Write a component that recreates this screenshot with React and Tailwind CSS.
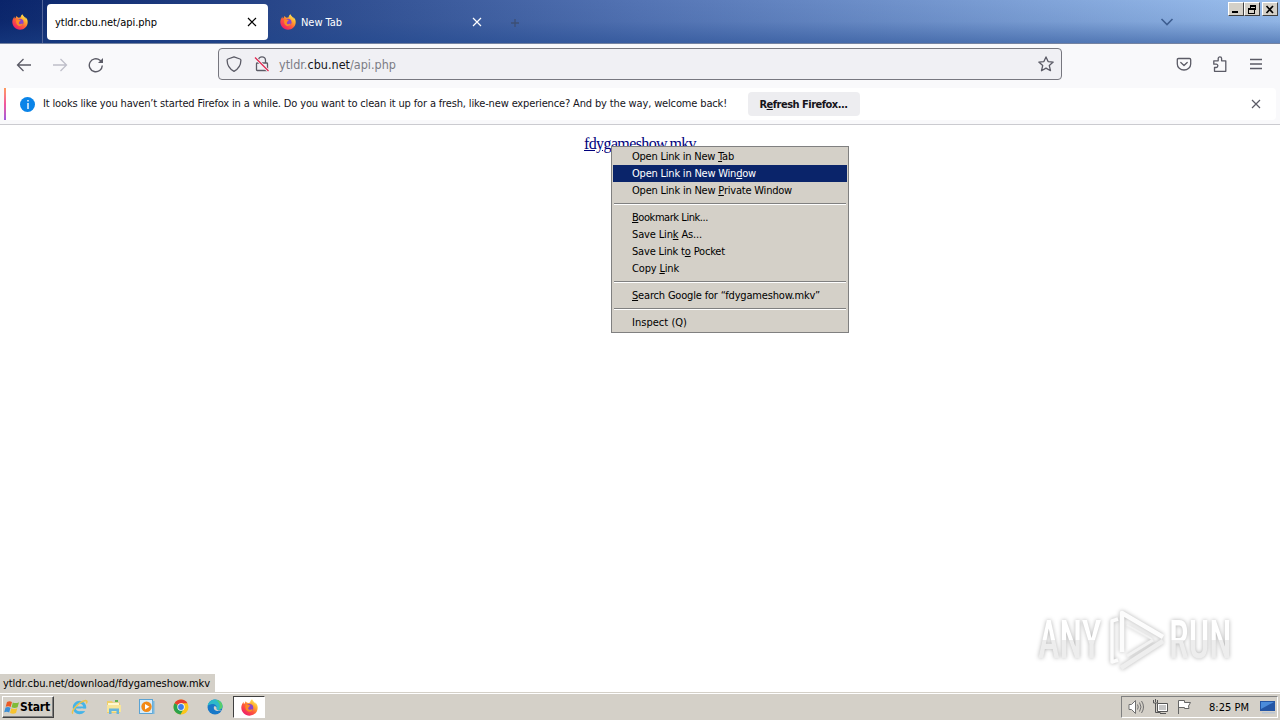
import { useLayoutEffect, useRef, useState } from "react";

// Spreads its letters so that the line fills the given width.
function Label({ w, className = "", children }) {
  const ref = useRef(null);
  const [gap, setGap] = useState(0);
  useLayoutEffect(() => {
    const el = ref.current;
    el.style.letterSpacing = "0px";
    const g = (w - el.getBoundingClientRect().width) / el.textContent.length;
    el.style.letterSpacing = g + "px";
    setGap(g);
  }, [w]);
  return (
    <span ref={ref} className={"inline-block shrink-0 whitespace-nowrap " + className} style={{ letterSpacing: gap }}>
      {children}
    </span>
  );
}

function Key({ children }) {
  return <span className="underline decoration-1 underline-offset-1">{children}</span>;
}

function Firefox({ className = "size-4", id }) {
  return (
    <svg viewBox="0 0 16 16" className={"shrink-0 " + className}>
      <defs>
        <linearGradient id={id} x1="0.9" y1="0.05" x2="0.2" y2="0.95">
          <stop offset="0" stopColor="#fff36b" />
          <stop offset="0.3" stopColor="#ffb22e" />
          <stop offset="0.6" stopColor="#ff5b3a" />
          <stop offset="1" stopColor="#ee1a6c" />
        </linearGradient>
      </defs>
      <path
        d="M15.2 5.6c-.4-1-1.2-2-2-2.3.3.6.5 1 .6 1.5C12.800 3 11.200 2.200 10.400 0.300c-1.300.8-1.700 2-1.700 2.900-.6 0-1.300.3-1.800.6C5.800 3.500 4.900 2.900 4.500 2c-.6.5-.8 1.300-.8 1.900-.5.2-.7.400-.9.700C2.400 4.200 2.500 3 2.700 2.500 1.500 3.500.5 5.500.3 7.600.1 12 3.500 15.700 8 15.700c4.200 0 7.700-3.200 7.700-7.500 0-.9-.2-1.800-.5-2.600z"
        fill={"url(#" + id + ")"}
      />
      <circle cx="8" cy="8.200" r="3.500" fill="#8a45c9" />
      <path d="M4.200 6.200C5 5 6.500 5 7.300 5.700l1.500.4c-.2.700-1 .8-1.300 1.300 0 .5-.6 1-.8 1.500.3 1.200 1.600 1.700 3 .9.6-.3 1-.2 1.300.2-.8 1.600-2.300 2.200-3.900 1.900C5 11.500 3.600 9 4.200 6.200z" fill="#ff8b22" />
    </svg>
  );
}

function Cross({ className }) {
  return (
    <svg viewBox="0 0 10 10" className={"size-2.5 shrink-0 " + className} fill="none" stroke="currentColor" strokeWidth="1.2">
      <path d="M1 1l8 8M9 1l-8 8" />
    </svg>
  );
}

function Caption({ className = "", children }) {
  return (
    <div className={"flex h-3.5 w-4 items-center justify-center border border-t-white border-l-white border-r-[#404040] border-b-[#404040] bg-[#d4d0c8] " + className}>
      <svg viewBox="0 0 12 11" className="h-[11px] w-3" fill="none" stroke="#000" shapeRendering="crispEdges">
        {children}
      </svg>
    </div>
  );
}

function TitleBar() {
  return (
    <div className="flex h-11 shrink-0 border-b border-[#7583a1] bg-linear-to-r from-[#0a246a] via-[#5474b4] to-[#9cc0ee]">
      <div className="flex h-full w-full bg-linear-to-b from-transparent via-[#2349881a] to-[#1e468c80]">
        <div className="flex w-[43px] items-center justify-center border-r border-[#52659a] pr-[3px]">
          <Firefox id="fx-view" />
        </div>
        <div className="mt-1 ml-1 flex h-9 w-[221px] items-center justify-between rounded-sm bg-white pr-[11px] pl-2">
          <Label w={102} className="pt-0.5 text-[11px] text-black">ytldr.cbu.net/api.php</Label>
          <Cross className="text-black" />
        </div>
        <div className="mt-1 flex h-9 w-[214px] items-center pl-3">
          <Firefox id="fx-tab" />
          <Label w={41} className="ml-[5px] pt-0.5 text-[11px] text-white">New Tab</Label>
          <Cross className="ml-auto text-white" />
        </div>
        <svg viewBox="0 0 10 10" className="mt-[18px] ml-7 size-2.5" stroke="#3d4f74" strokeWidth="1.3">
          <path d="M5 1v8M1 5h8" />
        </svg>
        <svg viewBox="0 0 14 8" className="mt-[18px] ml-auto h-2 w-3.5" fill="none" stroke="#3e5e91" strokeWidth="1.6">
          <path d="M1.500 1l5.500 5.500L12.500 1" />
        </svg>
        <div className="mt-0.5 ml-[54px] flex w-[52px]">
          <Caption><path d="M2 8.500h6M2 7.500h6" /></Caption>
          <Caption>
            <path d="M4 1.500h6M4.500 1v3M9.500 1v5M4 2.500h6M8 5.500h2M2 4.500h6v5h-5.500v-5M2 5.500h6" />
          </Caption>
          <Caption className="ml-[2px]">
            <path d="M2.500 2l6.500 7M9 2l-6.500 7" strokeWidth="1.700" shapeRendering="auto" />
          </Caption>
        </div>
      </div>
    </div>
  );
}

function NavBar() {
  return (
    <div className="flex h-11 shrink-0 items-center bg-[#f9f9fb] pb-[3px] text-[#5b5b66]">
      <svg viewBox="0 0 16 16" className="ml-4 size-4" fill="none" stroke="currentColor" strokeWidth="1.300">
        <path d="M15 8H1.700M7.500 2L1.500 8l6 6" />
      </svg>
      <svg viewBox="0 0 16 16" className="ml-5 size-4 text-[#bfbfc9]" fill="none" stroke="currentColor" strokeWidth="1.300">
        <path d="M1 8h13.300M8.500 2l6 6-6 6" />
      </svg>
      <svg viewBox="0 0 16 16" className="ml-5 size-4" fill="none" stroke="currentColor" strokeWidth="1.400">
        <path d="M14.300 8.500A6.500 6.500 0 1 1 12 3.300l1.500 1.500" />
        <path d="M15 1v5h-5z" fill="currentColor" stroke="none" />
      </svg>
      <div className="-mt-px ml-[114px] flex h-8 w-[844px] items-center rounded-sm border border-[#77777f] bg-[#f0f0f4] px-[7px]">
        <svg viewBox="0 0 16 16" className="size-4" fill="none" stroke="currentColor" strokeWidth="1.300" strokeLinejoin="round">
          <path d="M8 .8l6 2.200c.7.300.9.700.9 1.300-.1 4.700-2.300 8.700-6.900 11-4.600-2.300-6.800-6.300-6.900-11 0-.6.200-1 .9-1.300z" />
        </svg>
        <svg viewBox="0 0 16 16" className="ml-3 size-4" fill="none" stroke="currentColor" strokeWidth="1.300">
          <path d="M4.500 7V4.300a3.500 3.500 0 0 1 7 0V7M3.300 7h9.400q.8 0 .8.800v5.900q0 .8-.8.800H3.300q-.8 0-.8-.8V7.800q0-.8.8-.8z" />
          <path d="M1 1.500l13.500 13.500" stroke="#f0f0f4" strokeWidth="3" />
          <path d="M1 1.500l13.500 13.500" stroke="#e22850" strokeWidth="1.300" />
        </svg>
        <Label w={117} className="ml-[9px] pt-0.5 text-[12.5px] text-[#7c7c85]">
          ytldr.<span className="text-[#15141a]">cbu.net</span>/api.php
        </Label>
        <svg viewBox="0 0 16 16" className="ml-auto size-4" fill="none" stroke="currentColor" strokeWidth="1.300" strokeLinejoin="round">
          <path d="M8 .9l2.100 4.700 5.100.5-3.900 3.500 1.200 5.100L8 12.100l-4.500 2.600 1.200-5.100L.8 6.100l5.100-.5z" />
        </svg>
      </div>
      <svg viewBox="0 0 16 16" className="-mt-px ml-[114px] size-4" fill="none" stroke="currentColor" strokeWidth="1.300" strokeLinejoin="round" strokeLinecap="round">
        <path d="M2.500 2.500h11q1.200 0 1.200 1.200V8a6.700 6.000 0 0 1-13.400 0V3.700q0-1.200 1.200-1.200zM4.800 6.500L8 9.500l3.200-3" />
      </svg>
      <svg viewBox="0 0 16 16" className="-mt-0.5 ml-5 size-4" fill="none" stroke="currentColor" strokeWidth="1.300" strokeLinejoin="round">
        <path d="M2.500 15.300V11.500h1.700a1.500 1.500 0 0 0 0-3.300H1.800V4.800h4.400V2.600a1.700 1.700 0 0 1 3.400 0v2.200h4.200v10.500z" />
      </svg>
      <svg viewBox="0 0 16 16" className="ml-5 size-4" fill="none" stroke="currentColor" strokeWidth="1.300">
        <path d="M2 2.500h12M2 7h12M2 11.500h12" />
      </svg>
    </div>
  );
}

function Notice() {
  return (
    <div className="flex h-[37px] shrink-0 border-b border-[#cbcbd0] bg-[#f9f9fb] pr-1 pb-1 pl-1">
      <div className="w-0.5 bg-linear-to-b from-[#ff9a5a] via-[#f2559b] to-[#a057dd]" />
      <div className="flex h-8 flex-1 items-center rounded-r-sm bg-white pr-[15px]">
        <div className="ml-3.5 flex size-[15px] items-center justify-center rounded-full bg-[#0a84e8]">
          <svg viewBox="0 0 4 9" className="h-[9px] w-1" fill="#fff">
            <path d="M1.300 0h1.400v1.500H1.300zM1.300 3h1.400v6H1.300z" />
          </svg>
        </div>
        <Label w={684} className="ml-2 text-[11px] text-[#15141a]">
          It looks like you haven’t started Firefox in a while. Do you want to clean it up for a fresh, like-new experience? And by the way, welcome back!
        </Label>
        <div className="ml-[21px] flex h-6 w-28 items-center justify-center rounded-sm bg-[#ededf0]">
          <Label w={89} className="pt-0.5 pr-px text-[11px] font-bold text-[#15141a]">R<Key>e</Key>fresh Firefox...</Label>
        </div>
        <Cross className="ml-auto text-[#5b5b66]" />
      </div>
    </div>
  );
}

function Item({ w, active, children }) {
  return (
    <div className={"flex h-[17px] items-center pl-[19px] " + (active ? "bg-[#0a246a] text-white" : "text-black")}>
      <Label w={w} className="text-[11px] leading-[17px]">{children}</Label>
    </div>
  );
}

function Separator() {
  return (
    <div className="flex h-2.5 flex-col px-px pt-1">
      <div className="h-px bg-[#808080]" />
      <div className="h-px bg-white" />
    </div>
  );
}

function ContextMenu() {
  return (
    <div className="absolute top-[21px] left-[611px] w-[238px] border border-[#808080] bg-[#d4d0c8] p-px">
      <Item w={102}>Open Link in New <Key>T</Key>ab</Item>
      <Item w={124} active>Open Link in New Win<Key>d</Key>ow</Item>
      <Item w={160}>Open Link in New <Key>P</Key>rivate Window</Item>
      <Separator />
      <Item w={76}><Key>B</Key>ookmark Link...</Item>
      <Item w={70}>Save Lin<Key>k</Key> As...</Item>
      <Item w={93}>Save Link t<Key>o</Key> Pocket</Item>
      <Item w={47}>Copy <Key>L</Key>ink</Item>
      <Separator />
      <Item w={188}><Key>S</Key>earch Google for “fdygameshow.mkv”</Item>
      <Separator />
      <Item w={55}>Inspect (Q)</Item>
    </div>
  );
}

function Watermark() {
  return (
    <div className="absolute top-[484px] left-[1038px] flex h-[62px] w-[197px] items-center justify-between font-['Roboto','Liberation_Sans',sans-serif] drop-shadow-[0_0_2px_rgba(0,0,0,0.3)]">
      <div className="w-[66px]">
        <span className="inline-block origin-left scale-x-[0.68] bg-linear-to-b from-white from-50% to-[#ededed] to-50% bg-clip-text text-[54px] leading-none font-medium text-transparent">ANY</span>
      </div>
      <svg viewBox="0 0 58 64" className="h-16 w-[58px] shrink-0" fill="none" stroke="#fcfcfc" strokeWidth="4.500" strokeLinejoin="round">
        <path d="M13 60l42-27" stroke="#eeeeee" />
        <path d="M14 44V5l41 24" />
        <path d="M10 11L4 13v41l6-2" strokeWidth="3.500" />
        <path d="M19 48l26-16" strokeWidth="3" stroke="#f2f2f2" />
        <path d="M19 17l25 14" strokeWidth="2" stroke="#f2f2f2" />
      </svg>
      <div className="w-[66px]">
        <span className="inline-block origin-left scale-x-[0.67] bg-linear-to-b from-white from-50% to-[#ededed] to-50% bg-clip-text text-[54px] leading-none font-medium text-transparent">RUN</span>
      </div>
    </div>
  );
}

function TaskIcons() {
  return (
    <div className="ml-[17px] flex items-center gap-[18px]">
      <svg viewBox="0 0 17 16" className="h-4 w-[17px]" fill="none">
        <circle cx="8.500" cy="8.500" r="5.300" stroke="#45b4e8" strokeWidth="3" />
        <path d="M4.500 8.500h9" stroke="#45b4e8" strokeWidth="2" />
        <path d="M10 9.600h6v2.500h-6z" fill="#d4d0c8" />
        <path d="M2 14.500C-1 13 8 2.500 14.500 1.500c2 0 1.600 1.500.8 3" stroke="#ecc34c" strokeWidth="1.500" />
      </svg>
      <svg viewBox="0 0 16 16" className="size-4">
        <path d="M1 2h5l1 1.500h7V14H1z" fill="#efcf6a" />
        <path d="M2 4h11v4H2z" fill="#fff8cf" />
        <path d="M1 6h14v7H1z" fill="#f7e59a" />
        <path d="M3 15V9.500h10V15h-2.500v-3h-5v3z" fill="#67b5dc" />
        <path d="M9 1h3v2H9z" fill="#63b34b" />
      </svg>
      <svg viewBox="0 0 16 16" className="-ml-px size-4">
        <rect x=".5" y=".5" width="13" height="14" fill="#d6ecfa" stroke="#5ba3d3" />
        <path d="M13.500 2h2v13h-2z" fill="#7ab8df" />
        <circle cx="7.500" cy="7.800" r="5.200" fill="#f28a17" />
        <path d="M6 5v5.600l4.500-2.800z" fill="#fff" />
      </svg>
      <svg viewBox="0 0 16 16" className="size-4">
        <circle cx="8" cy="8" r="7.500" fill="#fbc61b" />
        <path d="M8 8L1.500 4.250A7.500 7.500 0 0 1 14.500 4.250H8z" fill="#e63e30" />
        <path d="M1.500 4.250A7.500 7.500 0 0 0 7.500 15.500L10.500 10 8 8z" fill="#2ba24c" />
        <circle cx="8" cy="8" r="3.700" fill="#fff" />
        <circle cx="8" cy="8" r="2.900" fill="#3e7ee8" />
      </svg>
      <svg viewBox="0 0 16 16" className="size-4">
        <circle cx="8" cy="8" r="7.500" fill="#1878c8" />
        <path d="M.6 7C1.200 3 4.500.5 8 .5c4.500 0 7.500 3 7.500 6.500 0 2.700-2 4-4.500 4-1.500 0-2.200-.6-1.500-1.500C10.500 7 8 5 5.500 5 3.300 5 1.500 6 .6 7z" fill="#2cb9c9" />
        <path d="M9 1c4 .2 6.500 3 6.500 6 0 2-1.500 3.500-3.500 3.800C14 6 12 3 9 1z" fill="#57ce6c" />
        <path d="M7 7.500c-1 3 1.500 5.500 7.500 4.300L15.500 11c-1.500.8-6 1-6-1.500C10 8 8.500 6.500 7 7.500z" fill="#d4d0c8" />
      </svg>
    </div>
  );
}

function TaskBar() {
  return (
    <div className="flex h-7 shrink-0 items-center border-t border-[#d4d0c8] bg-[#d4d0c8] shadow-[inset_0_1px_0_#fff]">
      <div className="mt-px ml-0.5 flex h-[22px] w-[52px] items-center border border-t-white border-r-[#404040] border-b-[#404040] border-l-white pl-px shadow-[inset_-1px_-1px_0_#808080]">
        <svg viewBox="0 0 16 15" className="h-[15px] w-4 shrink-0">
          <path d="M3 2c2-1.200 3.500-1 5 0L6.700 7C5 6 3.500 6 1.700 6.800z" fill="#ea5a26" />
          <path d="M8.800 2.400c2 1 4 .9 6.200-.2l-1.400 5c-2 1-4 1-6 .100z" fill="#80bb38" />
          <path d="M1.500 7.600c2-.9 3.500-.7 5 .200L5.200 12.500c-1.600-1-3.200-1-5-.2z" fill="#3c8fd6" />
          <path d="M7.300 8.200c2 1 4 1 6 .1L12 13c-2 1-4 1-6 0z" fill="#f7c32f" />
        </svg>
        <Label w={30} className="text-[12px] font-bold text-black">Start</Label>
      </div>
      <TaskIcons />
      <div className="mt-px ml-2.5 flex h-[22px] w-8 items-center justify-center border border-t-[#404040] border-r-white border-b-white border-l-[#404040] bg-white">
        <Firefox id="fx-task" className="size-[17px]" />
      </div>
      <div className="mt-px mr-0.5 ml-auto flex h-[22px] w-[157px] items-center border border-t-[#808080] border-r-white border-b-white border-l-[#808080] pl-1.5">
        <svg viewBox="0 0 16 16" className="size-4" fill="none" stroke="#707070">
          <path d="M1 5.500h2.500l4-4v13l-4-4H1z" fill="#fff" />
          <path d="M9.500 5.500q1.500 2.500 0 5M11.500 3.500q3 4.500 0 9M13.500 2q4 6 0 12" />
        </svg>
        <svg viewBox="0 0 16 16" className="ml-2 size-4" fill="none" stroke="#555">
          <path d="M5.500 4.500h10v8h-10zM8 14.500h6" fill="#fff" />
          <path d="M7 6h7v5H7z" fill="#c5c5c5" stroke="none" />
          <path d="M1.500 1v3h4V1M3.500 0v3M3.500 4v9.500h5" />
        </svg>
        <svg viewBox="0 0 16 16" className="ml-2 size-4" fill="#fff" stroke="#666">
          <path d="M2.500 15V1.500h6v2h6L12.500 7l.5 2.500H8.500v-1h-6" />
        </svg>
        <Label w={40} className="ml-[17px] pt-0.5 text-[11px] text-black">8:25 PM</Label>
        <svg viewBox="0 0 16 14" className="ml-[11px] h-3.5 w-4 shrink-0">
          <path d="M0 1h15v10H0z" fill="#2456a5" />
          <path d="M1 2h13L1 9z" fill="#4b8cdb" />
          <path d="M2 12h13v1.500H2z" fill="#b8c4d2" />
        </svg>
      </div>
    </div>
  );
}

export default function App() {
  return (
    <div className="flex h-[720px] w-[1280px] flex-col overflow-hidden bg-white font-['DejaVu_Sans_Condensed','DejaVu_Sans',sans-serif] font-stretch-condensed">
      <TitleBar />
      <NavBar />
      <Notice />
      <div className="relative flex flex-1 flex-col">
        <div className="flex pt-[9px] pl-[584px] font-['Liberation_Serif',serif] text-base leading-5 text-[#00007c]">
          <Label w={112} className="underline">fdygameshow.mkv</Label>
        </div>
        <ContextMenu />
        <Watermark />
        <div className="mt-auto flex h-[18px] w-[215px] items-center bg-[#d4d0c8] pt-[3px] pl-[3px]">
          <Label w={207} className="text-[11px] text-black">ytldr.cbu.net/download/fdygameshow.mkv</Label>
        </div>
      </div>
      <TaskBar />
    </div>
  );
}
